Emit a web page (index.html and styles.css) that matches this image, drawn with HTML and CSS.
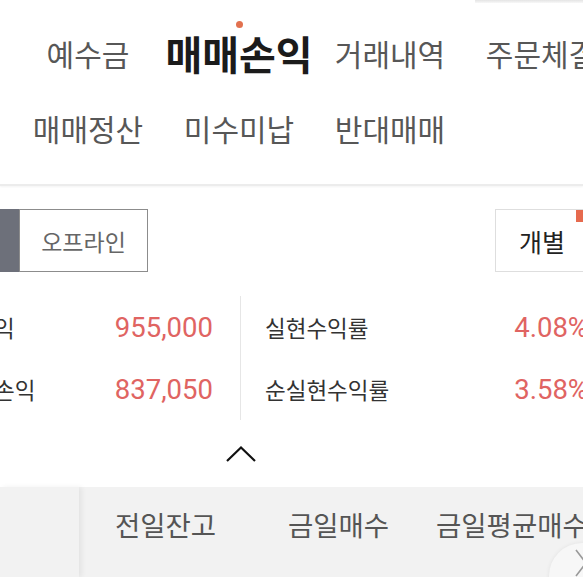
FILE: index.html
```html
<!DOCTYPE html>
<html lang="ko">
<head>
<meta charset="utf-8">
<title>매매손익</title>
<link rel="stylesheet" href="styles.css">
</head>
<body>
<div class="page">
  <div class="topline"></div>
  <nav class="tabs">
    <div class="tab">예수금</div>
    <div class="tab tab--active">매매손익</div>
    <div class="tab">거래내역</div>
    <div class="tab">주문체결</div>
    <div class="tab">매매정산</div>
    <div class="tab">미수미납</div>
    <div class="tab">반대매매</div>
  </nav>

  <div class="filters">
    <div class="segment">
      <div class="seg seg--on">온라인</div>
      <div class="seg">오프라인</div>
    </div>
    <div class="pick">개별<span class="badge"></span></div>
  </div>

  <div class="stats">
    <div class="stat-col stat-col--left">
      <div class="stat"><span class="label">실현손익</span><span class="value">955,000</span></div>
      <div class="stat"><span class="label">순실현손익</span><span class="value">837,050</span></div>
    </div>
    <div class="stat-col stat-col--right">
      <div class="stat"><span class="label">실현수익률</span><span class="value">4.08%</span></div>
      <div class="stat"><span class="label">순실현수익률</span><span class="value">3.58%</span></div>
    </div>
  </div>

  <div class="toggle">
    <svg class="chev-up" width="32" height="18" viewBox="0 0 32 18"><polyline points="2,16 16,2.5 30,16" fill="none" stroke="#111" stroke-width="2.2"/></svg>
  </div>

  <div class="table-head">
    <div class="fixed-col"><span>종목명</span></div>
    <div class="scroll-cols">
      <div class="col">전일잔고</div>
      <div class="col">금일매수</div>
      <div class="col col--wide">금일평균매수</div>
    </div>
    <div class="next">
      <svg width="14" height="30" viewBox="0 0 14 30"><polyline points="2,2 12,15 2,28" fill="none" stroke="#9a9a9a" stroke-width="1.6"/></svg>
    </div>
  </div>
</div>
</body>
</html>
```

FILE: styles.css
```css
* { box-sizing: border-box; }
html, body { margin: 0; padding: 0; background: #fff; }
body {
  font-family: "Noto Sans CJK KR", "Noto Sans", sans-serif;
}
.page {
  position: relative;
  width: 583px;
  height: 577px;
  overflow: hidden;
  background: #fff;
}
.topline {
  height: 3px;
  margin-left: 475px;
  background: linear-gradient(#e4e4e4, #f8f8f8);
}

/* tabs */
.tabs {
  display: grid;
  grid-template-columns: repeat(4, 120px);
  grid-auto-rows: 50px;
  column-gap: 31px;
  row-gap: 25px;
  padding: 25px 0 31px 28px;
  border-bottom: 2px solid #ececec;
  box-shadow: 0 1px 2px rgba(0,0,0,0.05);
}
.tab {
  font-size: 30px;
  line-height: 50px;
  color: #575757;
  text-align: center;
  white-space: nowrap;
}
.tab--active {
  position: relative;
  margin: 0 -20px;
  font-size: 40px;
  font-weight: 700;
  color: #1b1b1b;
}
.tab--active::before {
  content: "";
  position: absolute;
  top: -7px;
  left: 50%;
  width: 7px;
  height: 7px;
  margin-left: -3px;
  border-radius: 50%;
  background: #e2714f;
}

/* filters */
.filters {
  display: flex;
  justify-content: space-between;
  align-items: center;
  margin-top: 23px;
  height: 63px;
}
.segment { display: flex; }
.seg {
  width: 129px;
  height: 63px;
  flex-shrink: 0;
  border: 1px solid #8c8c8c;
  display: flex;
  align-items: center;
  justify-content: center;
  font-size: 23px;
  color: #666;
}
.seg--on {
  margin-left: -110px;
  background: #6d707a;
  border-color: #6d707a;
  color: #fff;
}
.pick {
  position: relative;
  width: 94px;
  height: 63px;
  flex-shrink: 0;
  margin-right: -6px;
  border: 1px solid #dedede;
  display: flex;
  align-items: center;
  justify-content: center;
  font-size: 25px;
  color: #222;
}
.badge {
  position: absolute;
  top: 0;
  right: 0;
  width: 12px;
  height: 12px;
  background: #e66a4e;
}

/* stats */
.stats {
  display: flex;
  margin-top: 24px;
  margin-left: -93px;
  height: 124px;
}
.stat-col { display: flex; flex-direction: column; flex-shrink: 0; }
.stat-col--left {
  width: 334px;
  padding: 0 27px 0 25px;
  border-right: 1px solid #e6e6e6;
}
.stat-col--right {
  width: 372px;
  padding: 0 25px 0 24px;
}
.stat {
  height: 62px;
  display: flex;
  justify-content: space-between;
  align-items: center;
  white-space: nowrap;
}
.label {
  font-size: 22.5px;
  color: #333;
}
.value {
  font-family: Roboto, "Noto Sans", sans-serif;
  font-size: 27.5px;
  color: #e06462;
}

/* toggle */
.toggle {
  height: 67px;
  display: flex;
  align-items: center;
  padding-left: 225px;
}
.chev-up { display: block; }

/* table head */
.table-head {
  display: flex;
  height: 90px;
  background: #f2f2f2;
}
.fixed-col {
  position: relative;
  z-index: 1;
  width: 79px;
  flex-shrink: 0;
  overflow: hidden;
  background: #f2f2f2;
  box-shadow: 3px 0 5px rgba(0,0,0,0.06);
  height: 90px;
}
.fixed-col span {
  display: block;
  margin-left: -74px;
  font-size: 27.5px;
  line-height: 74px;
  color: #555;
  white-space: nowrap;
}
.scroll-cols {
  display: flex;
}
.col {
  width: 173px;
  flex-shrink: 0;
  text-align: center;
  font-size: 27.5px;
  line-height: 74px;
  color: #555;
  white-space: nowrap;
}
.col--wide {
  width: auto;
  padding-left: 11px;
}
.next {
  position: absolute;
  left: 549px;
  top: 543px;
  width: 66px;
  height: 66px;
  border-radius: 50%;
  background: #f7f7f7;
  box-shadow: 0 0 4px rgba(0,0,0,0.07);
  padding: 5px 0 0 25px;
}
.next svg { display: block; }
```
